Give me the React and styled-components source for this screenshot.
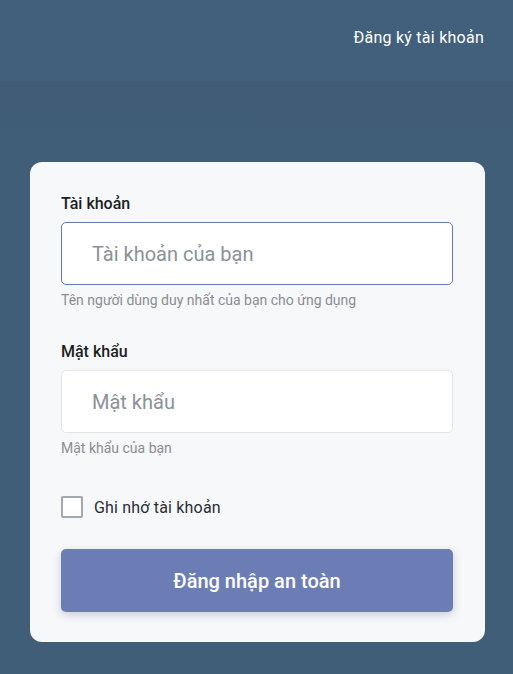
import styled, { createGlobalStyle } from 'styled-components'

const GlobalStyle = createGlobalStyle`
  html, body {
    margin: 0;
    padding: 0;
    background: #415e79;
    font-family: Roboto, "Noto Sans", "Liberation Sans", sans-serif;
  }
  * { box-sizing: border-box; }
`

const Page = styled.div`
  min-height: 674px;
  background: linear-gradient(to bottom, #3a536a 0px, #3f5a74 60px, #415e79 140px);
  display: flex;
  flex-direction: column;
`

const Header = styled.header`
  height: 81px;
  background: #425f7b;
  display: flex;
  align-items: center;
  justify-content: flex-end;
  padding: 0 29px 7px 0;
`

const HeaderLink = styled.a`
  color: #fff;
  font-size: 16px;
  font-weight: 400;
  letter-spacing: 0.25px;
  text-decoration: none;
  cursor: pointer;
`

const Main = styled.main`
  padding: 81px 28px 32px 30px;
`

const Card = styled.form`
  background: #f7f8fa;
  border-radius: 12px;
  padding: 30px 32px 30px 31px;
  display: flex;
  flex-direction: column;
`

const Field = styled.div`
  display: flex;
  flex-direction: column;
  margin-bottom: ${p => p.$space || 0}px;
`

const Label = styled.label`
  font-size: 16px;
  font-weight: 500;
  line-height: 24px;
  color: #1b1e24;
  margin-bottom: 6px;
`

const Input = styled.input`
  height: 63px;
  width: 100%;
  border: 1px solid ${p => (p.$focused ? '#6675b3' : '#e3e5e9')};
  border-radius: 5px;
  background: #fff;
  padding: 0 20px 0 30px;
  font-family: inherit;
  font-size: 20px;
  color: #333;
  outline: none;

  &::placeholder {
    color: #8b9199;
  }
`

const Help = styled.div`
  font-size: 14px;
  line-height: 18px;
  color: #8a8d92;
  margin-top: 6px;
`

const CheckRow = styled.label`
  display: flex;
  align-items: center;
  gap: 11px;
  font-size: 16px;
  letter-spacing: 0.18px;
  color: #2a2d33;
  margin-bottom: 31px;
  cursor: pointer;
`

const Box = styled.span`
  width: 22px;
  height: 22px;
  border: 2px solid #a3a8b0;
  border-radius: 2px;
  background: #fff;
  flex-shrink: 0;
`

const Button = styled.button`
  height: 63px;
  border: none;
  border-radius: 5px;
  background: #6c7db5;
  color: #fff;
  font-family: inherit;
  font-size: 20px;
  font-weight: 500;
  box-shadow: 0 3px 8px rgba(60, 80, 140, 0.25);
  cursor: pointer;
`

const App = () => {
  return (
    <>
      <GlobalStyle />
      <Page>
        <Header>
          <HeaderLink>Đăng ký tài khoản</HeaderLink>
        </Header>
        <Main>
          <Card onSubmit={e => e.preventDefault()}>
            <Field $space={31}>
              <Label>Tài khoản</Label>
              <Input $focused placeholder="Tài khoản của bạn" />
              <Help>Tên người dùng duy nhất của bạn cho ứng dụng</Help>
            </Field>
            <Field $space={39}>
              <Label>Mật khẩu</Label>
              <Input type="password" placeholder="Mật khẩu" />
              <Help>Mật khẩu của bạn</Help>
            </Field>
            <CheckRow>
              <Box />
              Ghi nhớ tài khoản
            </CheckRow>
            <Button type="submit">Đăng nhập an toàn</Button>
          </Card>
        </Main>
      </Page>
    </>
  )
}

export default App
